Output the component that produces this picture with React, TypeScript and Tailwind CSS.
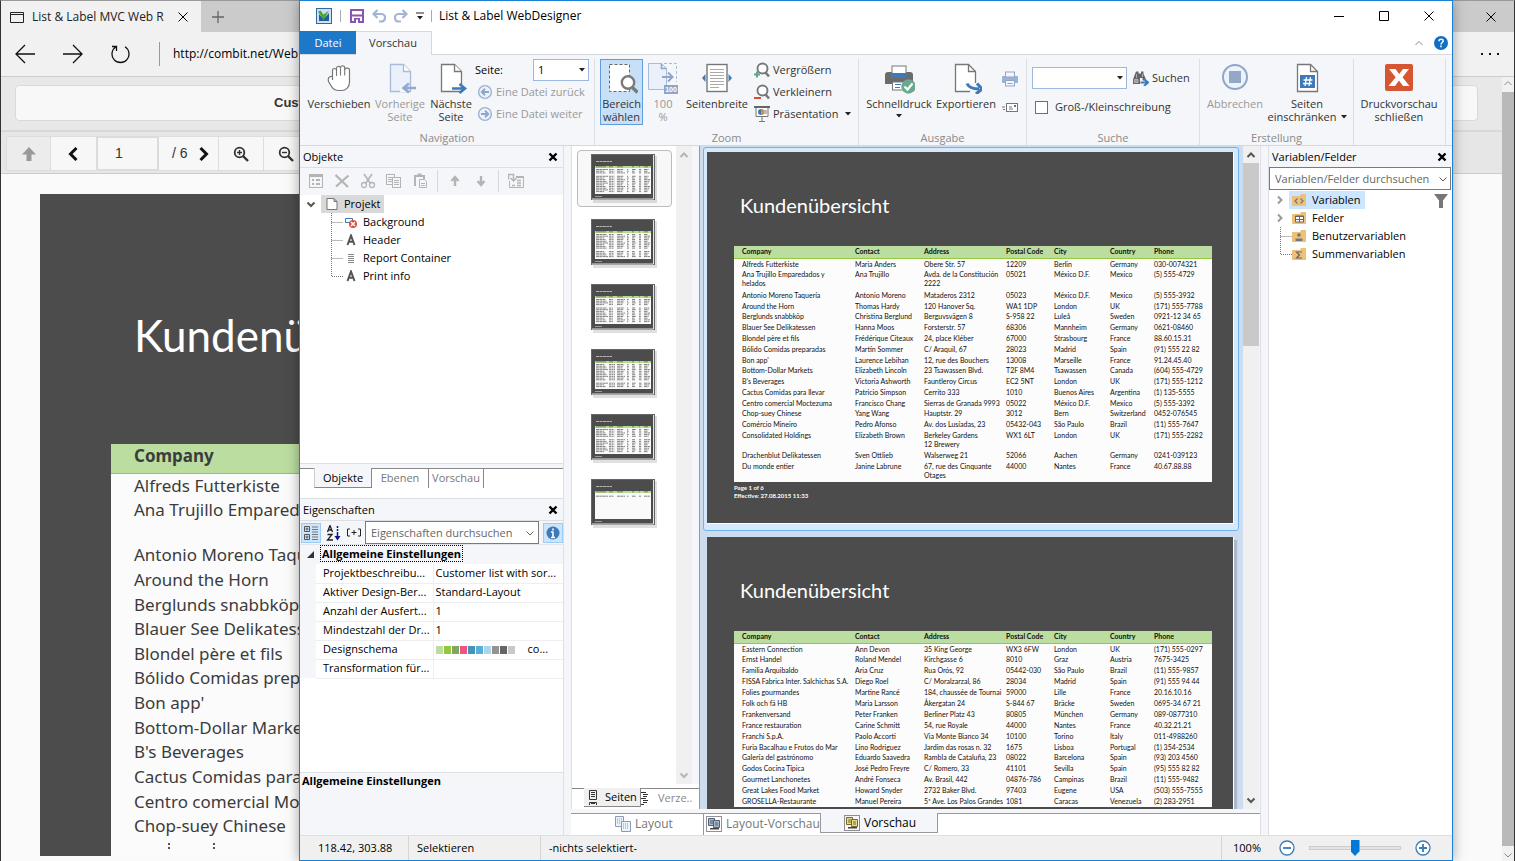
import React from "react";

type Row = string[];

const COLUMNS = ["Company", "Contact", "Address", "Postal Code", "City", "Country", "Phone"];

const PAGE_ONE: Row[] = [
  ["Alfreds Futterkiste", "Maria Anders", "Obere Str. 57", "12209", "Berlin", "Germany", "030-0074321"],
  ["Ana Trujillo Emparedados y\nhelados", "Ana Trujillo", "Avda. de la Constitución\n2222", "05021", "México D.F.", "Mexico", "(5) 555-4729"],
  ["Antonio Moreno Taquería", "Antonio Moreno", "Mataderos 2312", "05023", "México D.F.", "Mexico", "(5) 555-3932"],
  ["Around the Horn", "Thomas Hardy", "120 Hanover Sq.", "WA1 1DP", "London", "UK", "(171) 555-7788"],
  ["Berglunds snabbköp", "Christina Berglund", "Berguvsvägen 8", "S-958 22", "Luleå", "Sweden", "0921-12 34 65"],
  ["Blauer See Delikatessen", "Hanna Moos", "Forsterstr. 57", "68306", "Mannheim", "Germany", "0621-08460"],
  ["Blondel père et fils", "Frédérique Citeaux", "24, place Kléber", "67000", "Strasbourg", "France", "88.60.15.31"],
  ["Bólido Comidas preparadas", "Martín Sommer", "C/ Araquil, 67", "28023", "Madrid", "Spain", "(91) 555 22 82"],
  ["Bon app'", "Laurence Lebihan", "12, rue des Bouchers", "13008", "Marseille", "France", "91.24.45.40"],
  ["Bottom-Dollar Markets", "Elizabeth Lincoln", "23 Tsawassen Blvd.", "T2F 8M4", "Tsawassen", "Canada", "(604) 555-4729"],
  ["B's Beverages", "Victoria Ashworth", "Fauntleroy Circus", "EC2 5NT", "London", "UK", "(171) 555-1212"],
  ["Cactus Comidas para llevar", "Patricio Simpson", "Cerrito 333", "1010", "Buenos Aires", "Argentina", "(1) 135-5555"],
  ["Centro comercial Moctezuma", "Francisco Chang", "Sierras de Granada 9993", "05022", "México D.F.", "Mexico", "(5) 555-3392"],
  ["Chop-suey Chinese", "Yang Wang", "Hauptstr. 29", "3012", "Bern", "Switzerland", "0452-076545"],
  ["Comércio Mineiro", "Pedro Afonso", "Av. dos Lusíadas, 23", "05432-043", "São Paulo", "Brazil", "(11) 555-7647"],
  ["Consolidated Holdings", "Elizabeth Brown", "Berkeley Gardens\n12 Brewery", "WX1 6LT", "London", "UK", "(171) 555-2282"],
  ["Drachenblut Delikatessen", "Sven Ottlieb", "Walserweg 21", "52066", "Aachen", "Germany", "0241-039123"],
  ["Du monde entier", "Janine Labrune", "67, rue des Cinquante\nOtages", "44000", "Nantes", "France", "40.67.88.88"],
];

const PAGE_TWO: Row[] = [
  ["Eastern Connection", "Ann Devon", "35 King George", "WX3 6FW", "London", "UK", "(171) 555-0297"],
  ["Ernst Handel", "Roland Mendel", "Kirchgasse 6", "8010", "Graz", "Austria", "7675-3425"],
  ["Familia Arquibaldo", "Aria Cruz", "Rua Orós, 92", "05442-030", "São Paulo", "Brazil", "(11) 555-9857"],
  ["FISSA Fabrica Inter. Salchichas S.A.", "Diego Roel", "C/ Moralzarzal, 86", "28034", "Madrid", "Spain", "(91) 555 94 44"],
  ["Folies gourmandes", "Martine Rancé", "184, chaussée de Tournai", "59000", "Lille", "France", "20.16.10.16"],
  ["Folk och fä HB", "Maria Larsson", "Åkergatan 24", "S-844 67", "Bräcke", "Sweden", "0695-34 67 21"],
  ["Frankenversand", "Peter Franken", "Berliner Platz 43", "80805", "München", "Germany", "089-0877310"],
  ["France restauration", "Carine Schmitt", "54, rue Royale", "44000", "Nantes", "France", "40.32.21.21"],
  ["Franchi S.p.A.", "Paolo Accorti", "Via Monte Bianco 34", "10100", "Torino", "Italy", "011-4988260"],
  ["Furia Bacalhau e Frutos do Mar", "Lino Rodriguez", "Jardim das rosas n. 32", "1675", "Lisboa", "Portugal", "(1) 354-2534"],
  ["Galería del gastrónomo", "Eduardo Saavedra", "Rambla de Cataluña, 23", "08022", "Barcelona", "Spain", "(93) 203 4560"],
  ["Godos Cocina Típica", "José Pedro Freyre", "C/ Romero, 33", "41101", "Sevilla", "Spain", "(95) 555 82 82"],
  ["Gourmet Lanchonetes", "André Fonseca", "Av. Brasil, 442", "04876-786", "Campinas", "Brazil", "(11) 555-9482"],
  ["Great Lakes Food Market", "Howard Snyder", "2732 Baker Blvd.", "97403", "Eugene", "USA", "(503) 555-7555"],
  ["GROSELLA-Restaurante", "Manuel Pereira", "5ª Ave. Los Palos Grandes", "1081", "Caracas", "Venezuela", "(2) 283-2951"],
];

/* ---------- icons ---------- */

type IconProps = { size?: number; children: React.ReactNode; className?: string };
const Icon = ({ size = 16, children, className = "" }: IconProps) => (
  <svg width={size} height={size} viewBox={`0 0 ${size} ${size}`} fill="none" className={`shrink-0 ${className}`} aria-hidden="true">
    {children}
  </svg>
);

const Caret = ({ className = "" }: { className?: string }) => (
  <svg width="6" height="4" viewBox="0 0 6 4" className={`shrink-0 ${className}`} aria-hidden="true">
    <path d="M0 0h6L3 3.5z" fill="#222" />
  </svg>
);

const Chevron = ({ dir, color = "#555", thick = 2 }: { dir: "up" | "down" | "right"; color?: string; thick?: number }) => (
  <Icon size={10}>
    <path d={dir === "up" ? "M1.500 7L5 3.500L8.500 7" : dir === "down" ? "M1.500 3.500L5 7L8.500 3.500" : "M3 1.500L6.500 5L3 8.500"} stroke={color} strokeWidth={thick} />
  </Icon>
);

const PageShape = ({ fill = "#fff", stroke = "#777" }) => (
  <>
    <path d="M6.500 2.500h13l7 7v20h-20z" fill={fill} stroke={stroke} strokeWidth="1.3" />
    <path d="M19.500 2.500v7h7" fill="#fff" stroke={stroke} strokeWidth="1.300" />
  </>
);

const HandIcon = () => (
  <Icon size={32}>
    <path
      d="M9.500 18V8.500c0-2.700 4-2.700 4 0V6.500c0-3 4-3 4 0v-.500c0-3 4.200-3 4.200 0V8c0-2.600 4.800-2.600 4.800 0v12c0 5-3.500 8.500-8 8.500h-3c-3 0-5.500-1.500-7-4L5.500 19.500c-1-3 .5-5.500 4-5z"
      fill="#fff" stroke="#777" strokeWidth="1.200" />
    <path d="M13.500 8v6M17.500 6.500v7M21.700 7.500v6" stroke="#777" strokeWidth="1.100" />
  </Icon>
);

const PrevPageIcon = () => (
  <Icon size={32}>
    <PageShape fill="#eaf1fb" stroke="#a9bbd8" />
    <path d="M16 24h8v6h-8z" fill="#f4f6f9" />
    <path d="M32 26H20.500M25 21.500L19.500 26l5.500 4.500" stroke="#92a9cd" strokeWidth="2.600" />
  </Icon>
);

const NextPageIcon = () => (
  <Icon size={32}>
    <PageShape />
    <path d="M25 23h3v6h-3z" fill="#f4f6f9" />
    <path d="M17 26.500h12M24.500 22l5.500 4.500l-5.500 4.500" stroke="#3e79b8" strokeWidth="2.600" />
  </Icon>
);

const CircleArrow = ({ flip = false }: { flip?: boolean }) => (
  <Icon>
    <circle cx="8" cy="8" r="6.400" fill="#eef3fa" stroke="#9db1d2" strokeWidth="1.400" />
    <path d={flip ? "M4 8h7M8 4.800L11.200 8L8 11.200" : "M12 8H5M8 4.800L4.800 8L8 11.200"} stroke="#8fa6cb" strokeWidth="2" />
  </Icon>
);

const SelectZoneIcon = () => (
  <Icon size={32}>
    <rect x="3.500" y="2.500" width="20" height="27" fill="#fff" stroke="#666" strokeDasharray="3 2" />
    <circle cx="22" cy="20.500" r="6.200" fill="#fff" stroke="#7a7a7a" strokeWidth="2.400" />
    <path d="M26.500 25.500l5 5" stroke="#7a7a7a" strokeWidth="3.400" />
  </Icon>
);

const HundredIcon = () => (
  <Icon size={32}>
    <path d="M1.500 1.500h13l5 5v21h-18z" fill="#eaf1fb" stroke="#a9bbd8" />
    <path d="M14.500 1.500v5h5" stroke="#8fa6cb" strokeWidth="1.600" />
    <path d="M17 1.500h12.500V20" stroke="#a9bbd8" strokeDasharray="3 2" />
    <path d="M15 15h10M21 10.500l4.500 4.500l-4.500 4.500" stroke="#8fa6cb" strokeWidth="2" />
    <rect x="17" y="23" width="14" height="9" fill="#8fa6cb" />
    <text x="24" y="30" textAnchor="middle" fontSize="7" fontWeight="700" fontFamily="Liberation Sans" fill="#fff">100</text>
  </Icon>
);

const PageWidthIcon = () => (
  <Icon size={32}>
    <rect x="6" y="2.500" width="20" height="27" fill="#fff" stroke="#777" strokeWidth="1.400" />
    <path d="M9 7.500h14M9 10.500h14M9 13.500h14M9 16.500h14M9 19.500h14M9 22.500h14M9 25.500h9" stroke="#aaa" />
    <path d="M4.500 12v8L1 16zM27.500 12v8l3.500-4z" fill="#3e79b8" />
  </Icon>
);

const Magnifier = ({ plus = false }: { plus?: boolean }) => (
  <Icon>
    <circle cx="8.500" cy="6.500" r="5" stroke="#777" strokeWidth="1.900" fill="#fff" />
    <path d="M11.500 10.500l3.500 4" stroke="#777" strokeWidth="2.600" />
    {plus ? <path d="M0 12.500h6M3 9.500v6" stroke="#5fa58a" strokeWidth="2" /> : <path d="M0 14h7" stroke="#d94f33" strokeWidth="2" />}
  </Icon>
);

const PresentationIcon = () => (
  <Icon>
    <path d="M0 1h16" stroke="#666" strokeWidth="2" />
    <path d="M2 2v8.500h12V2" fill="#fff" stroke="#777" />
    <circle cx="7" cy="6" r="3" fill="#3e79b8" />
    <path d="M7 3a3 3 0 0 1 0 6z" fill="#e08a3c" />
    <path d="M8 11v4M5 15.500h6M10 5h3M10 7h3" stroke="#777" />
  </Icon>
);

const QuickPrintIcon = () => (
  <Icon size={32}>
    <path d="M2 13c0-2 1-3 3-3h22c2 0 3 1 3 3v9H2z" fill="#6b6b6b" />
    <rect x="9" y="4" width="14" height="8" fill="#fff" stroke="#777" />
    <rect x="8" y="11" width="16" height="5" fill="#3e79b8" />
    <rect x="9.500" y="20" width="13" height="8" fill="#fff" stroke="#777" />
    <path d="M12 22.500h6M12 25.500h5" stroke="#3e79b8" />
    <circle cx="25.500" cy="24.500" r="7.200" fill="#6aa890" />
    <path d="M21.500 24.500l3 3l5-6" stroke="#fff" strokeWidth="2.200" />
  </Icon>
);

const ExportIcon = () => (
  <Icon size={32}>
    <path d="M5.500 2.500h13l7 7v20h-20z" fill="#fff" stroke="#777" strokeWidth="1.300" />
    <path d="M18.500 2.500v7h7" stroke="#777" strokeWidth="1.300" />
    <path d="M20 21h12v11H20z" fill="#f4f6f9" />
    <path d="M17 21.500c2 4.500 6 5.500 12 5.500M27 21.500l5 5.500l-6 5" stroke="#3e79b8" strokeWidth="3" />
  </Icon>
);

const PrinterIcon = () => (
  <Icon>
    <rect x="0" y="5" width="16" height="7" rx="1" fill="#9db1d2" />
    <rect x="3.500" y="1" width="9" height="5" fill="#f4f6f9" stroke="#8fa6cb" />
    <rect x="3.500" y="9.500" width="9" height="5.500" fill="#f4f6f9" stroke="#8fa6cb" />
    <path d="M5.500 12.500h5" stroke="#8fa6cb" />
  </Icon>
);

const MailIcon = () => (
  <Icon>
    <rect x="4.500" y="3.500" width="11" height="8" fill="#fff" stroke="#777" />
    <path d="M0 7h3M1 9.500h2M7 7h3M7 9h4" stroke="#777" />
    <rect x="12" y="5" width="2" height="2" fill="#3e79b8" />
  </Icon>
);

const BinocularsIcon = () => (
  <Icon>
    <path d="M3 1.500h2.500v2h2.500v-2h2.500V4l2 4v2.500H9.500V8H7v6H0V9.500L2 4z" fill="#666" />
    <path d="M1.500 9.500h3.500v3H1.500zM3.500 4v4M9.500 4v3" fill="#999" stroke="#ccc" strokeWidth=".7" />
    <path d="M7.500 12.500h6M11 9l4 3.500L11 16" stroke="#3e79b8" strokeWidth="2" />
  </Icon>
);

const StopIcon = () => (
  <Icon size={32}>
    <circle cx="16" cy="15" r="12" fill="#eef3fa" stroke="#8fa6cb" strokeWidth="2" />
    <rect x="10" y="9" width="12" height="12" fill="#93a7c8" />
  </Icon>
);

const LimitIcon = () => (
  <Icon size={32}>
    <path d="M6.500 2.500h13l7 7v20h-20z" fill="#fff" stroke="#777" strokeWidth="1.300" />
    <path d="M19.500 2.500v7h7" stroke="#777" strokeWidth="1.300" />
    <rect x="9" y="13" width="15" height="13" fill="#3e79b8" />
    <path d="M15.500 15l-1.500 9M19.500 15L18 24M12.500 18h9M12 21.500h9" stroke="#fff" strokeWidth="1.300" />
  </Icon>
);

const ClosePreviewIcon = () => (
  <Icon size={32}>
    <rect x="2" y="2" width="28" height="27" rx="2" fill="#d65532" />
    <path d="M6 7h6.500l3.700 5l3.800-5H26l-6.500 8.300L26.500 24H20l-4-5.500L12 24H5.500l7.200-8.700z" fill="#fff" />
  </Icon>
);

const AppIcon = () => (
  <Icon>
    <rect x=".5" y=".5" width="15" height="15" fill="#cfe2f3" stroke="#2a6aa8" />
    <path d="M3 6v7h10V5l-5.500 6z" fill="#1f5f9e" />
    <path d="M2 3.500l2.500-1l3 4L13 2.500L7.500 12z" fill="#54a32c" />
  </Icon>
);

const SaveIcon = () => (
  <Icon size={14}>
    <path d="M1 1h12v12H1z" fill="#fff" stroke="#8a55b0" strokeWidth="2" />
    <path d="M1 6.500h12" stroke="#8a55b0" strokeWidth="2" />
    <path d="M4 9h6v5H4z" fill="#8a55b0" />
    <path d="M6 10.500h2V14H6z" fill="#fff" />
  </Icon>
);

const UndoIcon = ({ flip = false }: { flip?: boolean }) => (
  <Icon size={14} className={flip ? "-scale-x-100" : ""}>
    <path d="M5.500 1L1.500 5l4 4M2 5h7.500c5 0 4.500 7.500-.5 7.500H7" stroke="#a3b5d3" strokeWidth="2.200" />
  </Icon>
);

const CloseX = ({ bold = false, size = 10 }: { bold?: boolean; size?: number }) => (
  <svg width={size} height={size} viewBox="0 0 10 10" aria-hidden="true">
    <path d={bold ? "M1.500 1.500l7 7M8.500 1.500l-7 7" : "M.5.500l9 9M9.500.500l-9 9"} stroke="#000" strokeWidth={bold ? 2.400 : 1} />
  </svg>
);

/* object-tree toolbar icons */
const grey = "#b4b4b4";
const PropsIcon = () => (
  <Icon>
    <rect x="1.500" y="1.500" width="13" height="13" stroke={grey} />
    <path d="M1.500 3h13" stroke={grey} strokeWidth="2" />
    <path d="M4 7h2M4 11h2M8 7h4M8 11h4" stroke={grey} strokeWidth="2" />
  </Icon>
);
const DeleteIcon = () => (
  <Icon><path d="M1.500 2l12.500 12M14.500 2.500L2 13.500" stroke={grey} strokeWidth="2.200" /></Icon>
);
const CutIcon = () => (
  <Icon>
    <path d="M4 1l6.500 9.500M12 1L5.500 10.500" stroke={grey} strokeWidth="1.600" />
    <circle cx="4" cy="12" r="2.500" stroke={grey} strokeWidth="1.300" />
    <circle cx="12" cy="12" r="2.500" stroke={grey} strokeWidth="1.300" />
  </Icon>
);
const CopyIcon = () => (
  <Icon>
    <rect x=".5" y="1.500" width="8" height="10" stroke={grey} />
    <path d="M2 4.500h5M2 6.500h5M2 8.500h5" stroke={grey} />
    <rect x="6.500" y="4.500" width="8" height="10" fill="#f4f6f9" stroke={grey} />
    <path d="M8 7.500h5M8 9.500h5M8 11.500h5" stroke={grey} />
  </Icon>
);
const PasteIcon = () => (
  <Icon>
    <path d="M3 13V3h9v3" stroke={grey} strokeWidth="2" />
    <rect x="5.500" y="0.500" width="4" height="3" fill={grey} />
    <path d="M7.500 6.500h5l2 2v6h-7z" fill="#f4f6f9" stroke={grey} />
    <path d="M9 10.500h4M9 12.500h4" stroke={grey} />
  </Icon>
);
const MoveIcon = ({ down = false }: { down?: boolean }) => (
  <Icon className={down ? "rotate-180" : ""}><path d="M8 13V5M4.500 8L8 4l3.500 4" stroke={grey} strokeWidth="2.400" /></Icon>
);
const ConvertIcon = () => (
  <Icon>
    <path d="M8 3.500h7.500v11H1.500V8" stroke={grey} />
    <path d="M8 4h7" stroke={grey} strokeWidth="2" />
    <path d="M4 12.500h3M9 7.500h4M9 10h4M9 12.500h4" stroke={grey} strokeWidth="1.500" />
    <path d="M.5 6.500V1.500h5v5M2.500 5l3 3l3-3" stroke={grey} strokeWidth="1.500" />
  </Icon>
);

/* ---------- browser window behind the designer ---------- */

const BrowserWindow = () => (
  <div className="flex h-full flex-col overflow-hidden border-x border-t border-l-[#333] border-r-[#333] border-t-[#999] bg-[#fafafa]">
    <div className="flex h-[31px] shrink-0 bg-[#cbcbcb]">
      <div className="flex w-[200px] items-center gap-2 bg-[#f1f1f1] pl-[9px] text-[12px] text-[#222]">
        <Icon size={14}><path d="M.5 2.500h13v10H.5zM.5 4.500h13" stroke="#222" /></Icon>
        <span className="flex-1 whitespace-nowrap">List &amp; Label MVC Web R</span>
        <button aria-label="Tab schließen" className="mr-[13px]"><CloseX /></button>
      </div>
      <button aria-label="Neuer Tab" className="px-[10px]">
        <Icon size={14}><path d="M7 1v12M1 7h12" stroke="#666" strokeWidth="1.300" /></Icon>
      </button>
      <button aria-label="Browser schließen" className="ml-auto mr-[18px]"><CloseX /></button>
    </div>
    <div className="flex h-[45px] shrink-0 items-center border-b border-[#ccc] bg-[#f1f1f1] text-[13px]">
      <button aria-label="Zurück" className="ml-[14px]">
        <Icon size={20}><path d="M20 10H1M10 1L1 10l9 9" stroke="#111" strokeWidth="1.300" /></Icon>
      </button>
      <button aria-label="Vorwärts" className="ml-7">
        <Icon size={20}><path d="M0 10h19M10 1l9 9l-9 9" stroke="#111" strokeWidth="1.300" /></Icon>
      </button>
      <button aria-label="Aktualisieren" className="ml-7">
        <Icon size={20}><path d="M5 2.800a8.500 8.500 0 1 0 9 0M5.500 7V2.500H1" stroke="#111" strokeWidth="1.300" /></Icon>
      </button>
      <span className="ml-7 h-6 w-px bg-[#999]" />
      <span className="ml-[13px] whitespace-nowrap text-[12px] text-black">http://combit.net/Web</span>
      <button aria-label="Mehr" className="ml-auto mr-[15px]">
        <Icon size={18}><path d="M0 9h2M8 9h2M16 9h2" stroke="#111" strokeWidth="2" /></Icon>
      </button>
    </div>
    <div className="flex min-h-0 flex-1">
      <div className="flex min-w-0 flex-1 flex-col">
        <div className="h-[55px] shrink-0 border-b-2 border-[#d8d8d8] bg-[#e8e8e8] px-[14px] pt-2">
          <div className="mr-[10px] flex h-9 items-center rounded border border-[#d9d9d9] bg-[#f8f8f8] pl-[258px] font-['Liberation_Sans',sans-serif] text-[13px] font-bold text-[#333]">
            Cust
          </div>
        </div>
        <div className="flex h-[42px] shrink-0 items-stretch border-b border-[#ccc] bg-[#e6e6e6] px-[5px] pb-[2px] pt-1 font-['Liberation_Sans',sans-serif] text-[14px] text-[#333]">
          <button aria-label="Erste Seite" className="flex w-[45px] items-center justify-center border border-[#ddd] bg-[#ececec]">
            <Icon size={14}><path d="M7 0l7 7.500H9.500V14h-5V7.500H0z" fill="#999" /></Icon>
          </button>
          <button aria-label="Vorherige Seite" className="flex w-[45px] items-center justify-center border-y border-[#ddd] bg-[#f7f7f7]">
            <Icon size={14}><path d="M9.500 1L3.500 7l6 6" stroke="#111" strokeWidth="3" /></Icon>
          </button>
          <input aria-label="Seite" defaultValue="1" className="w-[63px] border-2 border-[#dcdcdc] bg-[#f7f7f7] pl-[17px] outline-none" />
          <button className="flex w-[60px] items-center gap-[9px] border-y border-r border-[#ddd] bg-[#f7f7f7] pl-[13px]">
            <span className="whitespace-nowrap">/ 6</span>
            <Icon size={14}><path d="M3.500 1l6 6l-6 6" stroke="#111" strokeWidth="3" /></Icon>
          </button>
          {["in", "out"].map((kind) => (
            <button key={kind} aria-label={kind === "in" ? "Vergrößern" : "Verkleinern"} className="flex w-[45px] items-center justify-center border-y border-r border-[#ddd] bg-[#f7f7f7]">
              <Icon>
                <circle cx="6.500" cy="6.500" r="4.800" stroke="#333" strokeWidth="1.800" />
                <path d="M10 10l5 5" stroke="#333" strokeWidth="2.400" />
                <path d={kind === "in" ? "M4 6.500h5M6.500 4v5" : "M4 6.500h5"} stroke="#333" strokeWidth="1.400" />
              </Icon>
            </button>
          ))}
        </div>
        <div className="min-h-0 flex-1 pb-[5px] pl-[39px] pr-20 pt-5">
          <div className="flex h-full flex-col overflow-hidden bg-[#4c4c4c]">
            <h1 className="h-[250px] shrink-0 pl-[94px] pt-[115px] font-['Lato',sans-serif] text-[44px] leading-[52px] text-white">Kundenübersicht</h1>
            <div className="ml-[71px] flex-1 overflow-hidden bg-[#fbfbfb] font-['Noto_Sans',sans-serif]">
              <table className="h-[395px] w-full table-fixed border-collapse text-left text-[17px] leading-6 text-[#3c3c3c]">
                <thead>
                  <tr className="h-[29px] border-b border-[#94c83d] bg-[#bbdda0]">
                    <th className="pl-[23px] align-top font-bold">Company</th>
                  </tr>
                </thead>
                <tbody>
                  {PAGE_ONE.slice(0, 14).map((r, i) => (
                    <tr key={r[0]}>
                      <td className={i === 1 ? "h-11 whitespace-nowrap pl-[23px] align-top" : "h-6 whitespace-nowrap pl-[23px] align-top"}>{r[0].split("\n")[0]}</td>
                    </tr>
                  ))}
                </tbody>
              </table>
              <svg width="120" height="10" viewBox="0 0 120 10" aria-hidden="true">
                <path d="M57 4h2v2h-2zM57 8h2v2h-2zM102 4h2v2h-2zM102 8h2v2h-2z" fill="#555" />
              </svg>
            </div>
          </div>
        </div>
      </div>
      <div className="flex w-[12px] flex-col items-center bg-[#f1f1f1] py-[1px]">
        <Chevron dir="up" color="#888" thick={1} />
        <div className="my-1 w-full flex-1 bg-[#b9b9b9]" />
        <Chevron dir="down" color="#888" thick={1} />
      </div>
    </div>
  </div>
);

/* ---------- ribbon ---------- */

type BigProps = { icon: React.ReactNode; label: string[]; width: string; disabled?: boolean; active?: boolean; caret?: boolean };
const BigButton = ({ icon, label, width, disabled, active, caret }: BigProps) => (
  <button
    disabled={disabled}
    className={`flex h-[66px] shrink-0 flex-col items-center border pt-[2px] leading-[13px] ${width} ${active ? "border-[#5f9de0] bg-[#c8e0f7]" : "border-transparent"} ${disabled ? "text-[#999]" : "text-[#333]"}`}
  >
    {icon}
    <span className="mt-[3px] flex flex-col items-center">
      {label.map((l, i) => (
        <span key={l} className="flex items-center gap-1 whitespace-nowrap">
          {l}
          {caret && label.length > 1 && i === label.length - 1 && <Caret />}
        </span>
      ))}
    </span>
    {caret && label.length === 1 && <Caret className="mt-1" />}
  </button>
);

const SmallButton = ({ icon, label, disabled, caret }: { icon: React.ReactNode; label: string; disabled?: boolean; caret?: boolean }) => (
  <button disabled={disabled} className={`flex h-[22px] items-center gap-[3px] whitespace-nowrap ${disabled ? "text-[#999]" : "text-[#333]"}`}>
    {icon}
    {label}
    {caret && <Caret className="ml-1" />}
  </button>
);

const Group = ({ title, width, children }: { title?: string; width: string; children: React.ReactNode }) => (
  <section className={`flex shrink-0 flex-col pt-1 ${width}`}>
    <div className="flex h-[70px] border-r border-[#dcdfe3]">{children}</div>
    <div className="h-[16px] border-r border-[#dcdfe3] text-center leading-[18px] text-[#8a8a8a]">{title}</div>
  </section>
);

const Ribbon = () => (
  <div className="flex h-[92px] shrink-0 overflow-hidden border-y border-[#d5d8dd] bg-[#f4f6f9]">
    <Group title="Navigation" width="w-[295px]">
      <BigButton width="ml-[6px] w-[66px]" icon={<HandIcon />} label={["Verschieben"]} />
      <BigButton width="w-[56px]" disabled icon={<PrevPageIcon />} label={["Vorherige", "Seite"]} />
      <BigButton width="w-[46px]" icon={<NextPageIcon />} label={["Nächste", "Seite"]} />
      <div className="ml-[1px] flex flex-1 flex-col">
        <div className="flex h-[22px] items-center justify-between pr-[5px]">
          <label htmlFor="page-select" className="text-black">Seite:</label>
          <span className="grid h-[22px] w-[56px] items-center">
            <select id="page-select" defaultValue="1" className="col-start-1 row-start-1 h-full appearance-none border border-[#9db8e0] bg-white pl-1 text-black outline-none">
              <option>1</option>
            </select>
            <Caret className="col-start-1 row-start-1 mr-1 justify-self-end" />
          </span>
        </div>
        <SmallButton disabled icon={<span className="pl-[2px]"><CircleArrow /></span>} label="Eine Datei zurück" />
        <SmallButton disabled icon={<span className="pl-[2px]"><CircleArrow flip /></span>} label="Eine Datei weiter" />
      </div>
    </Group>
    <Group title="Zoom" width="w-[264px]">
      <BigButton width="ml-[5px] w-[43px]" active icon={<SelectZoneIcon />} label={["Bereich", "wählen"]} />
      <BigButton width="w-[40px]" disabled icon={<HundredIcon />} label={["100", "%"]} />
      <BigButton width="w-[68px]" icon={<PageWidthIcon />} label={["Seitenbreite"]} />
      <div className="ml-[3px] flex flex-col items-start">
        <SmallButton icon={<Magnifier plus />} label="Vergrößern" />
        <SmallButton icon={<Magnifier />} label="Verkleinern" />
        <SmallButton icon={<PresentationIcon />} label="Präsentation" caret />
      </div>
    </Group>
    <Group title="Ausgabe" width="w-[168px]">
      <BigButton width="ml-[6px] w-[68px]" icon={<QuickPrintIcon />} label={["Schnelldruck"]} caret />
      <BigButton width="w-[66px]" icon={<ExportIcon />} label={["Exportieren"]} />
      <div className="ml-[3px] flex flex-col gap-[13px] pt-3">
        <button aria-label="Drucken"><PrinterIcon /></button>
        <button aria-label="Senden"><MailIcon /></button>
      </div>
    </Group>
    <Group title="Suche" width="w-[173px]">
      <div className="flex flex-col gap-[9px] pl-[5px] pt-2">
        <div className="flex items-center">
          <span className="grid h-[22px] w-[95px] items-center">
            <input aria-label="Suchbegriff" className="col-start-1 row-start-1 h-full w-full border border-[#9db8e0] bg-white outline-none" />
            <Caret className="col-start-1 row-start-1 mr-1 justify-self-end" />
          </span>
          <span className="ml-[6px]"><SmallButton icon={<BinocularsIcon />} label="Suchen" /></span>
        </div>
        <label className="flex items-center gap-[7px] whitespace-nowrap pl-[3px] leading-[18px] text-[#333]">
          <input type="checkbox" className="size-[13px] appearance-none border border-[#4c74b4] bg-white" />
          Groß-/Kleinschreibung
        </label>
      </div>
    </Group>
    <Group title="Erstellung" width="w-[154px]">
      <BigButton width="ml-[2px] w-[66px]" disabled icon={<StopIcon />} label={["Abbrechen"]} />
      <BigButton width="w-[78px]" icon={<LimitIcon />} label={["Seiten", "einschränken"]} caret />
    </Group>
    <Group width="w-[92px]">
      <BigButton width="ml-[4px] w-[82px]" icon={<ClosePreviewIcon />} label={["Druckvorschau", "schließen"]} />
    </Group>
  </div>
);

/* ---------- left dock ---------- */

const DockHeader = ({ title }: { title: string }) => (
  <div className="flex h-[21px] shrink-0 items-center justify-between bg-[#f4f6f9] pl-[3px] pr-[5px] pt-px text-black">
    {title}
    <button aria-label={`${title} schließen`}><CloseX bold /></button>
  </div>
);

const Branch = ({ last = false }: { last?: boolean }) => (
  <svg width="12" height="18" viewBox="0 0 12 18" className="shrink-0" aria-hidden="true">
    <path d={last ? "M.5 0V9.500H12" : "M.5 0V18M.5 9.500H12"} stroke="#777" strokeDasharray="1 1" fill="none" />
  </svg>
);

const LetterIcon = () => (
  <Icon size={12}><path d="M2.500 11L6 1.500L9.500 11M3.500 7.800h5" stroke="#555" strokeWidth="2" /></Icon>
);
const TREE = [
  { label: "Background", icon: <Icon size={12}><path d="M.5 2.500h7v4h-7z" stroke="#3e79b8" /><circle cx="8" cy="8" r="4" fill="#d94f33" /><path d="M6 6l4 4M10 6l-4 4" stroke="#fff" strokeWidth="1.500" /></Icon> },
  { label: "Header", icon: <LetterIcon /> },
  { label: "Report Container", icon: <Icon size={12}><path d="M3 2.500h6M3 4.500h6M3 6.500h6M3 8.500h6M3 10.500h6" stroke="#888" /></Icon> },
  { label: "Print info", icon: <LetterIcon /> },
];

const Sep = () => <span className="mx-1 h-[22px] w-px bg-[#d5d8dd]" />;
const ToolButton = ({ label, children }: { label: string; children: React.ReactNode }) => (
  <button aria-label={label} className="flex w-[26px] items-center justify-center">{children}</button>
);

const ObjectsPanel = () => (
  <section className="flex min-h-0 flex-col border-b border-[#dcdfe3] bg-white">
    <DockHeader title="Objekte" />
    <div className="flex h-7 shrink-0 items-center border-t border-[#dcdfe3] bg-[#f4f6f9] pb-px pl-[3px]">
      <ToolButton label="Eigenschaften"><PropsIcon /></ToolButton>
      <ToolButton label="Löschen"><DeleteIcon /></ToolButton>
      <ToolButton label="Ausschneiden"><CutIcon /></ToolButton>
      <ToolButton label="Kopieren"><CopyIcon /></ToolButton>
      <ToolButton label="Einfügen"><PasteIcon /></ToolButton>
      <Sep />
      <ToolButton label="Nach oben"><MoveIcon /></ToolButton>
      <ToolButton label="Nach unten"><MoveIcon down /></ToolButton>
      <Sep />
      <ToolButton label="Umwandeln"><ConvertIcon /></ToolButton>
    </div>
    <ul className="min-h-0 flex-1 overflow-hidden text-black">
      <li className="flex h-[18px] items-center pl-[6px]">
        <Chevron dir="down" />
        <span className="ml-[5px] flex h-[18px] items-center gap-[6px] bg-[#d9d9d9] pl-[5px] pr-1">
          <Icon size={12}><path d="M1 .5h7l3 3v8H1zM8 .500v3h3" fill="#fff" stroke="#777" /></Icon>
          Projekt
        </span>
      </li>
      {TREE.map((t, i) => (
        <li key={t.label} className="flex h-[18px] items-center pl-[31px]">
          <Branch last={i === TREE.length - 1} />
          <span className="ml-[2px] mr-[6px]">{t.icon}</span>
          {t.label}
        </li>
      ))}
    </ul>
    <div className="flex h-[25px] shrink-0 flex-col border-t border-[#dcdfe3] bg-white">
      <div className="h-1 shrink-0 bg-[#f4f6f9]" />
      <div className="flex h-5 text-[#777]">
        <span className="w-[14px] border-t border-[#888]" />
        <button className="w-[58px] border-x border-b border-[#888] border-l-[#ccc] bg-[#f4f6f9] pt-px text-black">Objekte</button>
        <button className="w-[56px] border-t border-[#888]">Ebenen</button>
        <button className="w-[56px] border-x border-t border-[#888]">Vorschau</button>
        <span className="flex-1 border-t border-[#888]" />
      </div>
    </div>
    <div className="h-[10px] shrink-0 bg-white" />
  </section>
);

const SWATCHES = ["bg-[#bbdda0]", "bg-[#94c83d]", "bg-[#82a562]", "bg-[#ea5681]", "bg-[#4395b8]", "bg-[#56b0d8]", "bg-[#add6ea]", "bg-[#939393]", "bg-[#656565]", "bg-[#c9c9c9]"];

const PROPS: [string, React.ReactNode][] = [
  ["Projektbeschreibu...", "Customer list with sor..."],
  ["Aktiver Design-Ber...", "Standard-Layout"],
  ["Anzahl der Ausfert...", "1"],
  ["Mindestzahl der Dr...", "1"],
  ["Designschema", (
    <span key="swatches" className="flex items-center">
      {SWATCHES.map((s) => <span key={s} className={`h-2 w-2 border-r border-white ${s}`} />)}
      <span className="ml-3">co...</span>
    </span>
  )],
  ["Transformation für...", ""],
];

const PropertiesPanel = () => (
  <section className="flex min-h-0 flex-col bg-white">
    <DockHeader title="Eigenschaften" />
    <div className="flex h-6 shrink-0 items-center border-t border-[#dcdfe3] bg-[#f4f6f9] pl-px">
      <button aria-label="Nach Kategorie" className="flex h-5 w-5 items-center justify-center border border-[#99cdf5] bg-[#cde5fa]">
        <Icon>
          <path d="M1.500 1.500h5v5h-5zM1.500 9.500h5v5h-5zM2.500 4h3M4 2.500v3M2.500 12h3M4 10.500v3" stroke="#555" />
          <path d="M9 2h6M9 4.500h6M9 7h6M9 9.500h6M9 12h6M9 14.500h6" stroke="#777" />
        </Icon>
      </button>
      <button aria-label="Alphabetisch" className="flex w-[25px] justify-center">
        <Icon>
          <path d="M1.500 7L4 .5L6.500 7M2 5h4M1.500 9.500H6L1.500 15H7" stroke="#222" strokeWidth="1.300" />
          <path d="M11.500 1v2M11.500 4v2M11.500 7v7" stroke="#12128a" strokeWidth="1.500" />
          <path d="M8.500 11h6l-3 4.500z" fill="#12128a" />
        </Icon>
      </button>
      <button aria-label="Alle aufklappen">
        <Icon><path d="M4 4H1.500v7H4M12 4h2.500v7H12M5.500 7.500h5M8 5v5" stroke="#222" /></Icon>
      </button>
      <span className="ml-[3px] grid h-[23px] flex-1 items-center">
        <input aria-label="Eigenschaften durchsuchen" placeholder="Eigenschaften durchsuchen" className="col-start-1 row-start-1 h-full w-full border border-[#7a7a7a] bg-white pl-[5px] outline-none placeholder:text-[#666]" />
        <span className="col-start-1 row-start-1 mr-1 justify-self-end"><Chevron dir="down" color="#666" thick={1} /></span>
      </span>
      <button aria-label="Hilfe anzeigen" className="ml-1 flex h-5 w-5 items-center justify-center border border-[#99cdf5] bg-[#cde5fa]">
        <Icon size={14}><circle cx="7" cy="7" r="6.500" fill="#3e79b8" /><path d="M7 2.500v2M7 5.500v6M5 6h2M5 11.500h4" stroke="#fff" strokeWidth="1.600" /></Icon>
      </button>
    </div>
    <div className="flex-1 overflow-hidden border-t border-[#e4e6ea]">
      <table className="w-full table-fixed border-collapse text-left text-black">
        <colgroup>
          <col className="w-4" />
          <col className="w-[117px]" />
          <col />
        </colgroup>
        <thead>
          <tr className="h-[19px] bg-[#f4f6f9]">
            <th className="pl-[7px]"><svg width="7" height="7" viewBox="0 0 7 7" aria-hidden="true"><path d="M7 0v7H0z" fill="#333" /></svg></th>
            <th colSpan={2} className="pl-1 font-bold"><span className="border border-dotted border-black px-px leading-[15px]">Allgemeine Einstellungen</span></th>
          </tr>
        </thead>
        <tbody>
          {PROPS.map(([k, v]) => (
            <tr key={k} className="h-[19px]">
              <td className="bg-[#f4f6f9]" />
              <td className="whitespace-nowrap border-b border-r border-[#eceef1] pl-[7px]">{k}</td>
              <td className="whitespace-nowrap border-b border-[#eceef1] pl-[2px]">{v}</td>
            </tr>
          ))}
        </tbody>
      </table>
    </div>
    <div className="h-[63px] shrink-0 border-t border-[#dcdfe3] bg-[#f4f6f9] pl-[2px] font-bold text-black">Allgemeine Einstellungen</div>
  </section>
);

/* ---------- page thumbnails ---------- */

const THUMB_COLS = [[4, 13], [17, 7], [25, 9], [35, 3], [40, 5], [47, 4], [52, 7]];

const Thumbnail = ({ rows, seed }: { rows: number; seed: number }) => (
  <svg width="66" height="49" viewBox="0 0 66 49" aria-hidden="true">
    <rect x="2" y="2" width="64" height="47" fill="#000" opacity=".12" />
    <rect x=".5" y=".5" width="63" height="45" fill="#4c4c4c" stroke="#666" />
    <path d="M1 45h61.500V1" stroke="#fff" fill="none" opacity=".85" />
    <path d="M5 7.500h16" stroke="#b5b5b5" strokeWidth="1" strokeDasharray="3 .5" />
    <rect x="4" y="12" width="56" height="28" fill="#fafafa" />
    <rect x="4" y="12" width="56" height="2" fill="#b4dc90" />
    {THUMB_COLS.map(([x, w]) => <path key={x} d={`M${x + 1} 12.800h${w - 3}`} stroke="#5b7a45" strokeWidth=".8" />)}
    {Array.from({ length: rows }, (_, r) =>
      (r * 5 + seed * 3) % 11 === 4 ? null : THUMB_COLS.map(([x, w], c) => (
        <path key={`${r}-${c}`} d={`M${x + 1} ${15.500 + r * 1.700}h${w - 1 - ((r * 3 + c * 5 + r * c + seed) % 4) * (w / 10)}`} stroke="#777" strokeWidth=".9" strokeDasharray={c % 2 ? "2 .5" : "3 .4"} />
      ))
    )}
    <path d="M4 42.500h7" stroke="#999" />
  </svg>
);

const PagesPanel = () => (
  <div className="flex w-[129px] shrink-0 flex-col border-l border-r border-l-[#dcdfe3] border-r-[#999] bg-white">
    <div className="flex min-h-0 flex-1">
      <div className="flex min-w-0 flex-1 flex-col items-center gap-2 overflow-hidden pt-1">
        {[14, 14, 14, 14, 14, 2].map((rows, i) => (
          <button
            key={i}
            aria-label={`Seite ${i + 1}`}
            className={`flex h-[57px] w-[95px] shrink-0 items-center justify-center rounded-[4px] border ${i === 0 ? "border-[#bbb] bg-[#f8f8f8]" : "border-transparent"}`}
          >
            <Thumbnail rows={rows} seed={i} />
          </button>
        ))}
      </div>
      <div className="flex w-4 flex-col items-center justify-between bg-[#f0f0f0] pb-1 pt-1"><Chevron dir="up" color="#b5b5b5" /><Chevron dir="down" color="#b5b5b5" /></div>
      <div className="w-[7px] bg-[#f4f6f9]" />
    </div>
    <div className="flex h-[25px] shrink-0 overflow-hidden bg-white pb-[2px] pt-1 text-[#888]">
      <span className="w-3 border-t border-[#888]" />
      <button className="flex w-[57px] items-center gap-[7px] whitespace-nowrap border-b border-r border-[#888] bg-[#f0f0f0] pl-1 text-black">
        <svg width="10" height="15" viewBox="0 0 10 15" className="shrink-0" fill="none" aria-hidden="true">
          <path d="M1.500.5h7v9h-7zM3 2.500h4M3 4.500h4M3 6.500h4M1.500 15v-2.500h7V15M3 13.500h4" stroke="#333" />
        </svg>
        Seiten
      </button>
      <button className="flex flex-1 items-center gap-[9px] whitespace-nowrap border-t border-[#888]">
        <svg width="8" height="13" viewBox="0 0 8 13" className="shrink-0" fill="none" aria-hidden="true">
          <path d="M0 .5h5M2 2.500h5M2 4.500h4M0 6.500h5M2 8.500h5M2 10.500h4M0 12.500h3" stroke="#333" />
        </svg>
        Verze..
      </button>
    </div>
  </div>
);

/* ---------- report preview ---------- */

const ReportPage = ({ rows, height, footer }: { rows: Row[]; height: string; footer?: boolean }) => (
  <article className="h-[372px] overflow-hidden border-b border-r border-white bg-[#4c4c4c] pl-[27px] font-['Lato',sans-serif]">
    <h2 className="h-[94px] pl-[6px] pt-[41px] text-[20px] leading-6 text-white">Kundenübersicht</h2>
    <table className={`table-fixed border-collapse bg-[#fcfcfc] text-left text-[7px] leading-[9px] text-[#111] ${height}`}>
      <colgroup>
        <col className="w-[119px]" /><col className="w-[69px]" /><col className="w-[82px]" /><col className="w-[48px]" />
        <col className="w-[56px]" /><col className="w-[44px]" /><col className="w-[60px]" />
      </colgroup>
      <thead>
        <tr className="border-b border-[#94c83d] bg-[#bbdda0]">
          {COLUMNS.map((c) => <th key={c} className="h-[12px] whitespace-nowrap pl-[2px] font-bold first:pl-2">{c}</th>)}
        </tr>
      </thead>
      <tbody>
        {rows.map((r) => (
          <tr key={r[0]}>
            {r.map((c, i) => <td key={i} className="whitespace-pre pl-[2px] pt-px align-top first:pl-2">{c}</td>)}
          </tr>
        ))}
      </tbody>
    </table>
    {footer && (
      <p className="pt-[2px] text-[6px] font-bold leading-[8px] text-white">
        Page 1 of 6<br />Effective: 27.08.2015 11:33
      </p>
    )}
  </article>
);

const Preview = () => (
  <div className="flex min-h-0 min-w-0 flex-1 border-r border-[#dcdfe3] bg-[#f4f6f9] pr-px">
    <div className="flex min-w-0 flex-1 flex-col overflow-hidden bg-[#cddcee] px-[3px] pt-[1px]">
      <div className="mr-px shrink-0 rounded-[3px] border border-[#6fb3f5] bg-[#d6e9fc] pb-[6px] pl-[3px] pr-1 pt-1">
        <ReportPage rows={PAGE_ONE} height="h-[236px]" footer />
      </div>
      <div className="ml-[4px] mr-[6px] mt-[6px] shrink-0 shadow-[3px_3px_1px_#a9bacd]">
        <ReportPage rows={PAGE_TWO} height="h-[176px]" />
      </div>
    </div>
    <div className="flex w-4 shrink-0 flex-col items-center bg-[#f0f0f0] pb-1 pt-1">
      <Chevron dir="up" />
      <div className="mt-[3px] flex w-full flex-1 flex-col"><div className="w-full basis-[29%] bg-[#c9c9c9]" /></div>
      <Chevron dir="down" />
    </div>
  </div>
);

const LayoutGlyph = () => (
  <Icon>
    <path d="M.5.500h8v10h-8z" fill="#eef3fa" stroke="#8a9bb5" /><path d="M2 3h5M2 5h5M2 7h5" stroke="#8a9bb5" strokeDasharray="1 1" />
    <path d="M6.500 5.500h9v10h-9z" fill="#eef3fa" stroke="#8a9bb5" /><path d="M8 8h6M8 10h6M8 12h6" stroke="#8a9bb5" strokeDasharray="1 1" />
  </Icon>
);
const PreviewGlyph = ({ page, dark }: { page: string; dark: string }) => (
  <Icon>
    <rect x=".5" y=".5" width="15" height="15" stroke="#223" strokeDasharray="1 1" />
    <path d="M2.500 2.500h6v7h-6z" fill={page} stroke={dark} />
    <path d="M7.500 4.500h6v7h-6z" fill={page} stroke={dark} />
    <path d="M4 13.500h9V12H4z" fill="#444" />
    <path d="M4 5h3M4 7h3M9 7h3M9 9h3" stroke={dark} />
  </Icon>
);

const DocTabs = () => (
  <div className="shrink-0 border-r border-[#dcdfe3] bg-[#f4f6f9] pt-1">
    <div className="flex h-[22px] bg-white text-[12px] text-[#777]">
      <button className="flex w-[132px] items-center gap-1 border-t border-[#999] pb-px pl-[44px]"><LayoutGlyph />Layout</button>
      <button className="flex w-[117px] items-center gap-1 whitespace-nowrap border-l border-t border-[#999] pb-px pl-[2px]"><PreviewGlyph page="#a9b7c9" dark="#4f6074" />Layout-Vorschau</button>
      <button className="mb-[2px] flex w-[118px] items-center gap-1 border-x border-b border-[#999] bg-[#f4f6f9] pl-[23px] text-black"><PreviewGlyph page="#ead98a" dark="#77682c" />Vorschau</button>
      <span className="flex-1 border-t border-[#999]" />
    </div>
  </div>
);

/* ---------- right dock ---------- */

const Folder = ({ children }: { children: React.ReactNode }) => (
  <Icon size={14}><path d="M0 3h8l1-2h5v12H0z" fill="#eec07a" />{children}</Icon>
);
const FIELDS = [
  { label: "Variablen", icon: <Folder><path d="M5.500 5.500L3 8l2.500 2.500M8.500 5.500L11 8l-2.500 2.500" stroke="#777" strokeWidth="1.300" /></Folder> },
  { label: "Felder", icon: <Folder><path d="M3.500 5h8v6h-8z" fill="#fff" stroke="#666" /><path d="M3.500 5.500h8M7.500 5v6M4 8.500h7" stroke="#666" /></Folder> },
  { label: "Benutzervariablen", icon: <Folder><circle cx="7" cy="6" r="1.800" fill="#777" /><path d="M3.500 12V9.500h7V12z" fill="#777" /></Folder> },
  { label: "Summenvariablen", icon: <Folder><path d="M10 5H4.500L7.500 8l-3 3H10" stroke="#666" strokeWidth="1.200" /></Folder> },
];

const FieldsPanel = () => (
  <aside className="flex w-[183px] shrink-0 flex-col bg-white">
    <DockHeader title="Variablen/Felder" />
    <span className="mr-px grid h-[23px] shrink-0 items-center">
      <input aria-label="Variablen/Felder durchsuchen" placeholder="Variablen/Felder durchsuchen" className="col-start-1 row-start-1 h-full w-full border border-[#7a7a7a] bg-white pb-px pl-[5px] outline-none placeholder:text-[#666]" />
      <span className="col-start-1 row-start-1 mr-[3px] justify-self-end"><Chevron dir="down" color="#555" thick={1} /></span>
    </span>
    <div className="flex justify-between pr-1 pt-[1px]">
      <ul className="text-black">
        {FIELDS.map((f, i) => (
          <li key={f.label} className="flex h-[18px] items-center pl-[6px]">
            {i < 2 ? <Chevron dir="right" color="#999" /> : <span className="ml-[5px] flex"><Branch last={i === 3} /></span>}
            <span className={`flex h-[18px] items-center gap-[6px] pl-[3px] pr-1 ${i === 0 ? "bg-[#cce6ff]" : ""} ${i < 2 ? "ml-[4px]" : "-ml-[3px]"}`}>
              {f.icon}
              {f.label}
            </span>
          </li>
        ))}
      </ul>
      <button aria-label="Filter" className="mt-[3px] h-[14px]">
        <Icon size={14}><path d="M0 0h14L9 6.500V14H5V6.500z" fill="#777" /></Icon>
      </button>
    </div>
  </aside>
);

/* ---------- designer window ---------- */

const RoundButton = ({ plus = false }: { plus?: boolean }) => (
  <button aria-label={plus ? "Vergrößern" : "Verkleinern"}>
    <Icon><circle cx="8" cy="8" r="7" fill="#fff" stroke="#3e79b8" strokeWidth="1.300" /><path d={plus ? "M4 8h8M8 4v8" : "M4 8h8"} stroke="#3e79b8" strokeWidth="1.800" /></Icon>
  </button>
);

const DesignerWindow = () => (
  <div className="absolute inset-y-0 left-[299px] right-[62px] flex flex-col border border-[#1a80d4] bg-[#f4f6f9] shadow-[0_0_12px_rgba(0,0,0,0.35)]">
    <header className="flex h-[30px] shrink-0 items-center bg-white text-[12px] text-black">
      <span className="ml-4"><AppIcon /></span>
      <span className="mx-2 h-[12px] w-px bg-[#aaa]" />
      <button aria-label="Speichern" className="ml-[1px]"><SaveIcon /></button>
      <button aria-label="Rückgängig" className="ml-2"><UndoIcon /></button>
      <button aria-label="Wiederholen" className="ml-2"><UndoIcon flip /></button>
      <button aria-label="Schnellzugriff anpassen" className="ml-2"><Icon size={8}><path d="M0 1h8" stroke="#222" /><path d="M1 4h6L4 7.500z" fill="#222" /></Icon></button>
      <span className="ml-[7px] mr-[7px] h-[12px] w-px bg-[#aaa]" />
      <span>List &amp; Label WebDesigner</span>
      <span className="ml-auto mr-[18px] flex gap-[35px]">
        <button aria-label="Minimieren"><Icon size={10}><path d="M0 5.500h10" stroke="#000" /></Icon></button>
        <button aria-label="Maximieren"><Icon size={10}><path d="M.5.500h9v9h-9z" stroke="#000" /></Icon></button>
        <button aria-label="Schließen"><CloseX /></button>
      </span>
    </header>
    <nav className="-mb-px flex h-[24px] shrink-0 bg-white">
      <button className="w-[56px] bg-[#1e78c8] text-white">Datei</button>
      <button className="relative w-[76px] border-r border-t border-[#d5d8dd] bg-[#f4f6f9] pr-px text-[#333]">Vorschau</button>
      <span className="ml-auto mr-1 flex items-center gap-[10px]">
        <Chevron dir="up" color="#888" thick={1} />
        <button aria-label="Hilfe">
          <Icon size={14}><circle cx="7" cy="7" r="7" fill="#0f6fc6" /><path d="M5 5.200c0-2.600 4.200-2.600 4.200-.2C9.200 6.600 7 6.500 7 8.500M7 9.500v1.800" stroke="#fff" strokeWidth="1.500" /></Icon>
        </button>
      </span>
    </nav>
    <Ribbon />
    <main className="flex min-h-0 flex-1">
      <div className="grid w-[264px] shrink-0 grid-rows-[353fr_336fr] border-r border-[#dcdfe3]">
        <ObjectsPanel />
        <PropertiesPanel />
      </div>
      <div className="w-[7px] shrink-0" />
      <div className="flex min-w-0 flex-1 flex-col">
        <div className="flex min-h-0 flex-1">
          <PagesPanel />
          <Preview />
        </div>
        <DocTabs />
      </div>
      <div className="w-2 shrink-0 border-r border-[#dcdfe3]" />
      <FieldsPanel />
    </main>
    <footer className="flex h-[25px] shrink-0 items-center border-t border-[#dcdfe3] bg-[#f0f0f0] text-black">
      <span className="w-[109px] border-r border-[#d5d5d5] pl-[18px] leading-6">118.42, 303.88</span>
      <span className="w-[132px] border-r border-[#d5d5d5] pl-2 leading-6">Selektieren</span>
      <span className="pl-2">-nichts selektiert-</span>
      <span className="ml-auto border-l border-[#d5d5d5] pl-[11px] leading-6">100%</span>
      <span className="ml-[18px] mr-[21px] flex items-center gap-[14px]">
        <RoundButton />
        <input
          type="range"
          aria-label="Zoom"
          defaultValue="50"
          className="h-4 w-[92px] appearance-none bg-transparent [&::-webkit-slider-runnable-track]:h-1 [&::-webkit-slider-runnable-track]:border [&::-webkit-slider-runnable-track]:border-[#ccc] [&::-webkit-slider-runnable-track]:bg-[#e4e4e4] [&::-webkit-slider-thumb]:-mt-[7px] [&::-webkit-slider-thumb]:h-4 [&::-webkit-slider-thumb]:w-[9px] [&::-webkit-slider-thumb]:appearance-none [&::-webkit-slider-thumb]:bg-[#0078d7] [&::-webkit-slider-thumb]:[clip-path:polygon(0_0,100%_0,100%_70%,50%_100%,0_70%)]"
        />
        <RoundButton plus />
      </span>
    </footer>
  </div>
);

export default function App() {
  return (
    <div className="relative h-screen overflow-hidden bg-white font-['Open_Sans',sans-serif] text-[11px]">
      <BrowserWindow />
      <DesignerWindow />
    </div>
  );
}
